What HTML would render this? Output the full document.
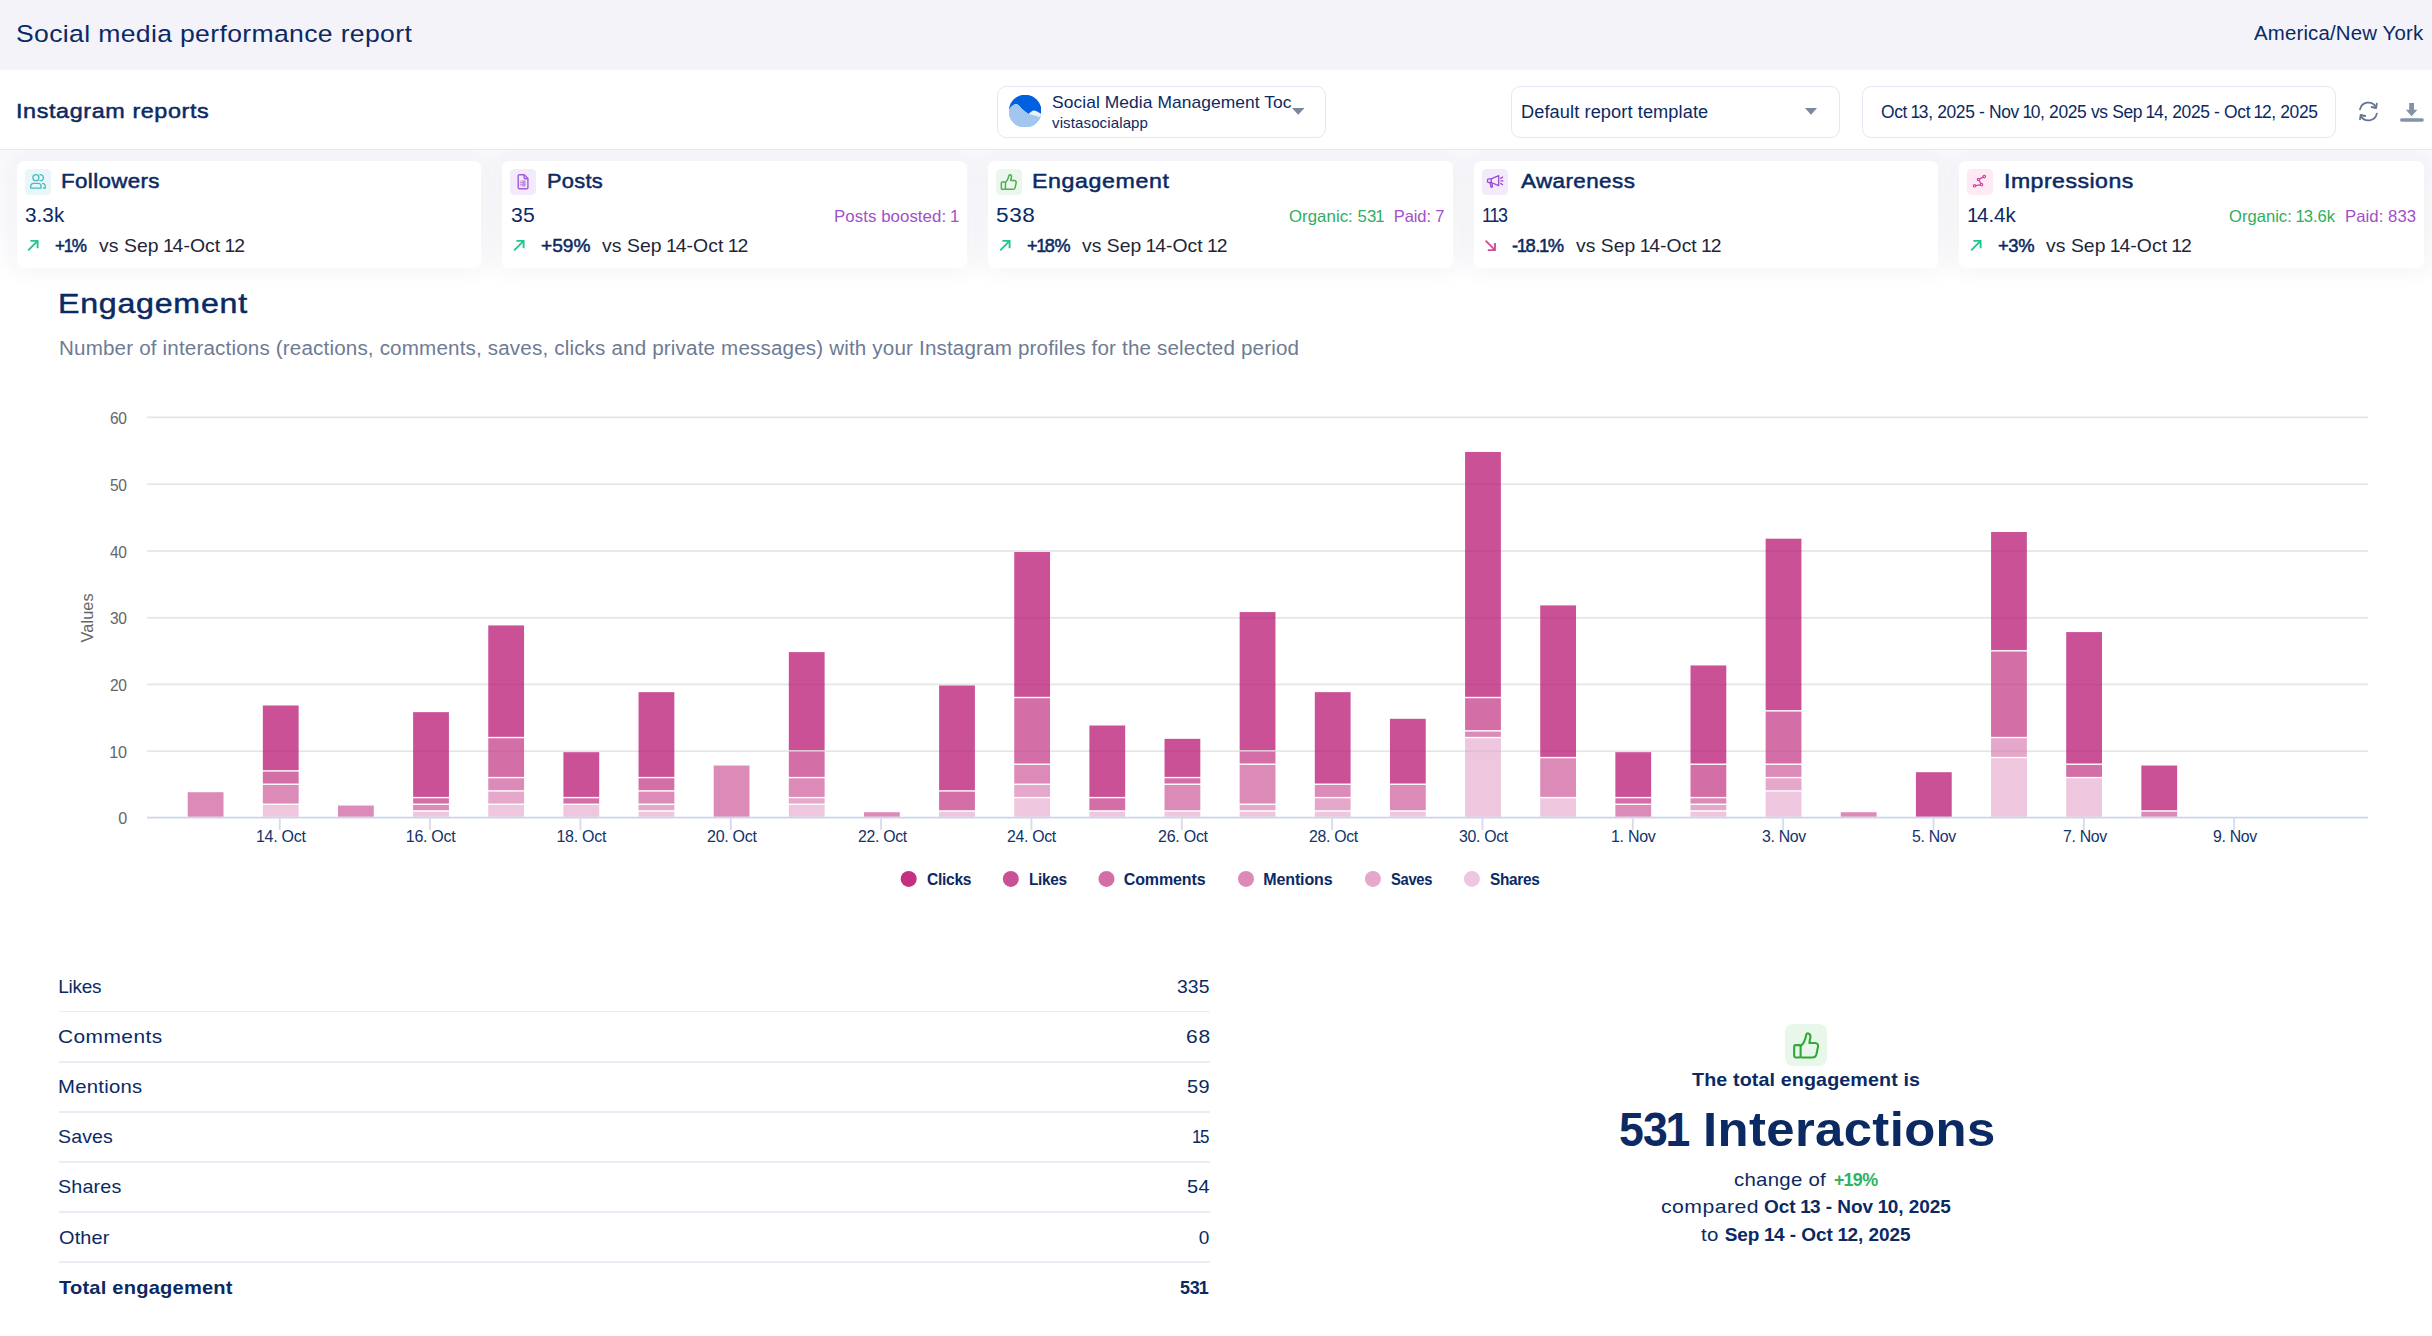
<!DOCTYPE html>
<html lang="en"><head><meta charset="utf-8"><title>Social media performance report</title>
<style>
html,body{margin:0;padding:0;background:#fff}
@media (max-width:1300px){html{zoom:.5}}
body{width:2432px;height:1336px;position:relative;overflow:hidden;font-family:"Liberation Sans",Arial,sans-serif}
.abs,.t,.box,.card,.ico,.ln{position:absolute}
.t{white-space:pre;line-height:1}
.n1{margin:0 -0.06em}
.n1b{margin:0 -0.03em}
.box{box-sizing:border-box;border:1.9px solid #e5e8f2;border-radius:9px;background:#fff}
.card{top:161px;height:106.5px;width:464.5px;background:#fff;border-radius:7px;box-shadow:0 0 22px 6px rgba(40,50,110,.04)}
.ico{width:26px;height:26px;border-radius:4.5px;top:169px}
.ln{left:58.5px;width:1151px;height:1.8px;background:#e9ecf4}
</style></head><body>
<div class="abs" style="left:0;top:0;width:2432px;height:69.5px;background:#f4f3f9"></div>
<div class="abs" style="left:0;top:150px;width:2432px;height:130px;background:linear-gradient(#f9f9fc,#fbfbfd 60%,#fff)"></div>
<div class="abs" style="left:0;top:148.6px;width:2432px;height:1.5px;background:#e7e8f0"></div>
<div class="box" style="left:997.2px;top:85.5px;width:329.3px;height:52.2px"></div>
<div class="box" style="left:1510.6px;top:85.5px;width:329.3px;height:52.2px"></div>
<div class="box" style="left:1861.8px;top:85.5px;width:474.4px;height:52.2px"></div>
<svg class="abs" style="left:1008.8px;top:95px" width="32.2" height="32" viewBox="0 0 32 32"><defs><clipPath id="av"><circle cx="16" cy="16.100" r="16.400"/></clipPath></defs><g clip-path="url(#av)"><rect width="32" height="32" fill="#0060e0"/><path d="M0 14.3C2.5 11.5 5 8.6 7.6 9.2c2.6.6 4.6 4.6 7.4 6.6 1.6 1.2 3 2.2 4.4 3.1 1.8-1.6 3.8-3.6 5.9-3.4 2.2.2 4.4 2 6.700 3.300V32H0z" fill="#e6effa"/><path d="M0 14.3C2.5 11.5 5 8.600 7.6 9.2c2.6.6 4.6 4.6 7.4 6.6 1.6 1.200 3 2.200 4.400 3.100 3.700 1 8.600 2.100 12.600 3.300V32H0z" fill="#a3c6ee"/></g></svg>
<svg class="abs" style="left:1291.8px;top:107.9px" width="12.4" height="7" viewBox="0 0 12.4 7"><path d="M0 0h12.4L6.2 6.8z" fill="#7c869d"/></svg>
<svg class="abs" style="left:1805.4px;top:108px" width="12" height="7" viewBox="0 0 12 7"><path d="M0 0h12L6 6.800z" fill="#7c869d"/></svg>
<svg class="abs" style="left:2356px;top:99px" width="25" height="25" viewBox="0 0 25 25"><g fill="none" stroke="#66758f" stroke-width="1.8" stroke-linecap="round" stroke-linejoin="round"><path d="M4 10.400A8.600 8.600 0 0 1 19.900 8"/><path d="M20.800 4.600l-.7 4.400-4.500-1"/><path d="M20.800 14.600A8.600 8.600 0 0 1 4.900 17"/><path d="M4 20.400l.7-4.400 4.500 1"/></g></svg>
<svg class="abs" style="left:2398px;top:100px" width="28" height="24" viewBox="0 0 28 24"><path d="M11.200 3h4.800v6.800h3.400L13.600 16.200 7.900 9.800h3.300z" fill="#8491ab"/><rect x="2" y="18.200" width="23.800" height="3.600" rx="1.800" fill="#8491ab"/></svg>
<div class="abs" style="left:0;top:150px;width:2432px;height:160px;overflow:hidden">
<div class="card" style="left:16.5px;top:11px"></div>
<div class="card" style="left:502.2px;top:11px"></div>
<div class="card" style="left:988px;top:11px"></div>
<div class="card" style="left:1473.75px;top:11px"></div>
<div class="card" style="left:1959.4px;top:11px"></div>
</div>
<div class="ico" style="left:24.50px;background:#eaf7f9"><svg width="26" height="26" viewBox="0 0 26 26" style="display:block"><g fill="none" stroke="#46bcc4" stroke-width="1.3"><circle cx="10.9" cy="8.7" r="3"/><path d="M5.7 19.2v-1.700a3.100 3.100 0 0 1 3.100-3.100h4.200a3.100 3.100 0 0 1 3.100 3.100v1.700z"/><path d="M14.4 5.900a3 3 0 1 1 0 5.600"/><path d="M17.100 14.400a3.200 3.200 0 0 1 3.200 3.200v1.600h-2.300"/></g></svg></div>
<svg class="abs" style="left:27.10px;top:239.4px" width="13" height="13" viewBox="0 0 13 13"><path d="M1.2 11.3 L10.6 1.9 M3.4 1.9 H10.6 V9.2" fill="none" stroke="#22c78a" stroke-width="1.9" stroke-linecap="butt" stroke-linejoin="miter"/></svg>
<div class="ico" style="left:510.20px;background:#f3ebfb"><svg width="26" height="26" viewBox="0 0 26 26" style="display:block"><g fill="none" stroke="#a35bd4" stroke-width="1.4" stroke-linejoin="round"><path d="M9.300 5.800h4.900l3.700 3.800v9.100a1.100 1.100 0 0 1-1.100 1.100H9.300a1.100 1.100 0 0 1-1.100-1.100V6.900a1.100 1.100 0 0 1 1.100-1.100z"/><path d="M14.100 6v2.700a1 1 0 0 0 1 1h2.700"/></g><g fill="#a35bd4"><rect x="9.700" y="11.300" width="5.800" height="6.300" fill-opacity=".28"/><rect x="12.300" y="11.300" width="3.200" height="6.300" fill-opacity=".4"/><rect x="9.700" y="13" width="5.800" height=".7" fill-opacity=".5"/><rect x="9.700" y="15" width="5.800" height=".7" fill-opacity=".5"/></g></svg></div>
<svg class="abs" style="left:512.80px;top:239.4px" width="13" height="13" viewBox="0 0 13 13"><path d="M1.2 11.3 L10.6 1.9 M3.4 1.9 H10.6 V9.2" fill="none" stroke="#22c78a" stroke-width="1.9" stroke-linecap="butt" stroke-linejoin="miter"/></svg>
<div class="ico" style="left:996.00px;background:#ebf7ec"><svg width="26" height="26" viewBox="0 0 26 26" style="display:block"><g transform="translate(12.800 13.100) scale(.93) translate(-13.300 -13)" fill="none" stroke="#4bb04f" stroke-width="1.600" stroke-linejoin="round"><rect x="5.300" y="12.800" width="4.400" height="8" rx="1"/><path d="M9.700 13.400c2-1.600 3.200-4.600 3.600-7.200.2-1 .9-1.300 1.500-1.200 1.200.3 1.500 1.700 1.300 2.900l-.7 3.400h3.900c1.300 0 2.200 1.100 1.900 2.400l-1.100 5.200c-.3 1.200-1.200 1.900-2.400 1.900H9.700"/></g></svg></div>
<svg class="abs" style="left:998.60px;top:239.4px" width="13" height="13" viewBox="0 0 13 13"><path d="M1.2 11.3 L10.6 1.9 M3.4 1.9 H10.6 V9.2" fill="none" stroke="#22c78a" stroke-width="1.9" stroke-linecap="butt" stroke-linejoin="miter"/></svg>
<div class="ico" style="left:1481.75px;background:#f3ebfb"><svg width="26" height="26" viewBox="0 0 26 26" style="display:block"><g fill="none" stroke="#9a4bcf" stroke-width="1.300" stroke-linejoin="round" stroke-linecap="round"><path d="M9.200 9.900l7.500-3.200v10l-7.500-3.200z"/><path d="M9.200 9.900H6.600a1.100 1.100 0 0 0-1.100 1.100v1.400a1.100 1.100 0 0 0 1.100 1.100h2.600"/><path d="M8.300 13.800l.5 3.800a.8.800 0 0 0 1.600 0l-.3-3.200"/><path d="M18.800 9.400l1.800-1.300M18.900 11.900h2M18.800 14.400l1.800 1.300"/></g></svg></div>
<svg class="abs" style="left:1484.15px;top:239.4px" width="13" height="13" viewBox="0 0 13 13"><path d="M1.6 1.7 L11 11.1 M3.8 11.1 H11 V3.9" fill="none" stroke="#d14d9c" stroke-width="1.9"/></svg>
<div class="ico" style="left:1967.40px;background:#fdeaf5"><svg width="26" height="26" viewBox="0 0 26 26" style="display:block"><g fill="none" stroke="#d0449a" stroke-width="1.200"><circle cx="7.600" cy="16.800" r="1.200"/><circle cx="14.500" cy="15.600" r="1.200"/><circle cx="11.500" cy="10.500" r="1.200"/><circle cx="17.300" cy="7.600" r="1.200"/><path d="M8.800 16.600l4.500-.8M13.900 14.500l-1.800-3M12.600 9.900l3.600-1.800"/></g></svg></div>
<svg class="abs" style="left:1970.00px;top:239.4px" width="13" height="13" viewBox="0 0 13 13"><path d="M1.2 11.3 L10.6 1.9 M3.4 1.9 H10.6 V9.2" fill="none" stroke="#22c78a" stroke-width="1.9" stroke-linecap="butt" stroke-linejoin="miter"/></svg>
<svg class="abs" style="left:0;top:380px" width="2432" height="540" viewBox="0 380 2432 540">
<rect x="147" y="416.40" width="2221" height="1.8" fill="#e6e6e6"/>
<rect x="147" y="483.30" width="2221" height="1.8" fill="#e6e6e6"/>
<rect x="147" y="550.10" width="2221" height="1.8" fill="#e6e6e6"/>
<rect x="147" y="616.90" width="2221" height="1.8" fill="#e6e6e6"/>
<rect x="147" y="683.50" width="2221" height="1.8" fill="#e6e6e6"/>
<rect x="147" y="750.30" width="2221" height="1.8" fill="#e6e6e6"/>
<rect x="187.70" y="792.21" width="35.8" height="24.59" fill="#dc8ab8"/>
<rect x="262.84" y="804.96" width="35.8" height="11.84" fill="#eec6de"/>
<rect x="262.84" y="784.94" width="35.8" height="18.61" fill="#dc8ab8"/>
<rect x="262.84" y="771.60" width="35.8" height="11.94" fill="#d36fa6"/>
<rect x="262.84" y="705.48" width="35.8" height="64.72" fill="#cb5197"/>
<rect x="337.98" y="805.56" width="35.8" height="11.24" fill="#dc8ab8"/>
<rect x="413.12" y="811.63" width="35.8" height="5.17" fill="#eec6de"/>
<rect x="413.12" y="804.96" width="35.8" height="5.27" fill="#dc8ab8"/>
<rect x="413.12" y="798.29" width="35.8" height="5.27" fill="#d36fa6"/>
<rect x="413.12" y="712.15" width="35.8" height="84.73" fill="#cb5197"/>
<rect x="488.26" y="804.96" width="35.8" height="11.84" fill="#eec6de"/>
<rect x="488.26" y="791.61" width="35.8" height="11.94" fill="#e5a7ca"/>
<rect x="488.26" y="778.27" width="35.8" height="11.94" fill="#dc8ab8"/>
<rect x="488.26" y="738.24" width="35.8" height="38.63" fill="#d36fa6"/>
<rect x="488.26" y="625.42" width="35.8" height="111.42" fill="#cb5197"/>
<rect x="563.40" y="804.96" width="35.8" height="11.84" fill="#eec6de"/>
<rect x="563.40" y="798.29" width="35.8" height="5.27" fill="#d36fa6"/>
<rect x="563.40" y="752.18" width="35.8" height="44.70" fill="#cb5197"/>
<rect x="638.54" y="811.63" width="35.8" height="5.17" fill="#eec6de"/>
<rect x="638.54" y="804.96" width="35.8" height="5.27" fill="#e5a7ca"/>
<rect x="638.54" y="791.61" width="35.8" height="11.94" fill="#dc8ab8"/>
<rect x="638.54" y="778.27" width="35.8" height="11.94" fill="#d36fa6"/>
<rect x="638.54" y="692.14" width="35.8" height="84.73" fill="#cb5197"/>
<rect x="713.68" y="765.53" width="35.8" height="51.27" fill="#dc8ab8"/>
<rect x="788.82" y="804.96" width="35.8" height="11.84" fill="#eec6de"/>
<rect x="788.82" y="798.29" width="35.8" height="5.27" fill="#e5a7ca"/>
<rect x="788.82" y="778.27" width="35.8" height="18.61" fill="#dc8ab8"/>
<rect x="788.82" y="751.58" width="35.8" height="25.29" fill="#d36fa6"/>
<rect x="788.82" y="652.11" width="35.8" height="98.07" fill="#cb5197"/>
<rect x="863.96" y="812.23" width="35.8" height="4.57" fill="#dc8ab8"/>
<rect x="939.10" y="811.63" width="35.8" height="5.17" fill="#eec6de"/>
<rect x="939.10" y="791.61" width="35.8" height="18.61" fill="#d36fa6"/>
<rect x="939.10" y="685.47" width="35.8" height="104.75" fill="#cb5197"/>
<rect x="1014.24" y="798.29" width="35.8" height="18.51" fill="#eec6de"/>
<rect x="1014.24" y="784.94" width="35.8" height="11.94" fill="#e5a7ca"/>
<rect x="1014.24" y="764.93" width="35.8" height="18.61" fill="#dc8ab8"/>
<rect x="1014.24" y="698.21" width="35.8" height="65.32" fill="#d36fa6"/>
<rect x="1014.24" y="552.03" width="35.8" height="144.78" fill="#cb5197"/>
<rect x="1089.38" y="811.63" width="35.8" height="5.17" fill="#eec6de"/>
<rect x="1089.38" y="798.29" width="35.8" height="11.94" fill="#d36fa6"/>
<rect x="1089.38" y="725.50" width="35.8" height="71.39" fill="#cb5197"/>
<rect x="1164.52" y="811.63" width="35.8" height="5.17" fill="#eec6de"/>
<rect x="1164.52" y="784.94" width="35.8" height="25.29" fill="#dc8ab8"/>
<rect x="1164.52" y="778.27" width="35.8" height="5.27" fill="#d36fa6"/>
<rect x="1164.52" y="738.84" width="35.8" height="38.03" fill="#cb5197"/>
<rect x="1239.66" y="811.63" width="35.8" height="5.17" fill="#eec6de"/>
<rect x="1239.66" y="804.96" width="35.8" height="5.27" fill="#e5a7ca"/>
<rect x="1239.66" y="764.93" width="35.8" height="38.63" fill="#dc8ab8"/>
<rect x="1239.66" y="751.58" width="35.8" height="11.94" fill="#d36fa6"/>
<rect x="1239.66" y="612.08" width="35.8" height="138.10" fill="#cb5197"/>
<rect x="1314.80" y="811.63" width="35.8" height="5.17" fill="#eec6de"/>
<rect x="1314.80" y="798.29" width="35.8" height="11.94" fill="#e5a7ca"/>
<rect x="1314.80" y="784.94" width="35.8" height="11.94" fill="#dc8ab8"/>
<rect x="1314.80" y="692.14" width="35.8" height="91.40" fill="#cb5197"/>
<rect x="1389.94" y="811.63" width="35.8" height="5.17" fill="#eec6de"/>
<rect x="1389.94" y="784.94" width="35.8" height="25.29" fill="#dc8ab8"/>
<rect x="1389.94" y="718.82" width="35.8" height="64.72" fill="#cb5197"/>
<rect x="1465.08" y="738.24" width="35.8" height="78.56" fill="#eec6de"/>
<rect x="1465.08" y="731.57" width="35.8" height="5.27" fill="#dc8ab8"/>
<rect x="1465.08" y="698.21" width="35.8" height="31.96" fill="#d36fa6"/>
<rect x="1465.08" y="451.96" width="35.8" height="244.85" fill="#cb5197"/>
<rect x="1540.22" y="798.29" width="35.8" height="18.51" fill="#eec6de"/>
<rect x="1540.22" y="758.26" width="35.8" height="38.63" fill="#dc8ab8"/>
<rect x="1540.22" y="605.41" width="35.8" height="151.45" fill="#cb5197"/>
<rect x="1615.36" y="804.96" width="35.8" height="11.84" fill="#dc8ab8"/>
<rect x="1615.36" y="798.29" width="35.8" height="5.27" fill="#d36fa6"/>
<rect x="1615.36" y="752.18" width="35.8" height="44.70" fill="#cb5197"/>
<rect x="1690.50" y="811.63" width="35.8" height="5.17" fill="#eec6de"/>
<rect x="1690.50" y="804.96" width="35.8" height="5.27" fill="#e5a7ca"/>
<rect x="1690.50" y="798.29" width="35.8" height="5.27" fill="#dc8ab8"/>
<rect x="1690.50" y="764.93" width="35.8" height="31.96" fill="#d36fa6"/>
<rect x="1690.50" y="665.45" width="35.8" height="98.08" fill="#cb5197"/>
<rect x="1765.64" y="791.61" width="35.8" height="25.19" fill="#eec6de"/>
<rect x="1765.64" y="778.27" width="35.8" height="11.94" fill="#e5a7ca"/>
<rect x="1765.64" y="764.93" width="35.8" height="11.94" fill="#dc8ab8"/>
<rect x="1765.64" y="711.55" width="35.8" height="51.97" fill="#d36fa6"/>
<rect x="1765.64" y="538.69" width="35.8" height="171.46" fill="#cb5197"/>
<rect x="1840.78" y="812.23" width="35.8" height="4.57" fill="#dc8ab8"/>
<rect x="1915.92" y="772.20" width="35.8" height="44.60" fill="#cb5197"/>
<rect x="1991.06" y="758.26" width="35.8" height="58.54" fill="#eec6de"/>
<rect x="1991.06" y="738.24" width="35.8" height="18.62" fill="#e5a7ca"/>
<rect x="1991.06" y="651.51" width="35.8" height="85.33" fill="#d36fa6"/>
<rect x="1991.06" y="532.02" width="35.8" height="118.09" fill="#cb5197"/>
<rect x="2066.20" y="778.27" width="35.8" height="38.53" fill="#eec6de"/>
<rect x="2066.20" y="764.93" width="35.8" height="11.94" fill="#d36fa6"/>
<rect x="2066.20" y="632.09" width="35.8" height="131.43" fill="#cb5197"/>
<rect x="2141.34" y="811.63" width="35.8" height="5.17" fill="#dc8ab8"/>
<rect x="2141.34" y="765.53" width="35.8" height="44.70" fill="#cb5197"/>
<rect x="262.84" y="750.30" width="35.8" height="1.8" fill="#400020" fill-opacity="0.05"/>
<rect x="413.12" y="750.30" width="35.8" height="1.8" fill="#400020" fill-opacity="0.05"/>
<rect x="488.26" y="683.50" width="35.8" height="1.8" fill="#400020" fill-opacity="0.05"/>
<rect x="488.26" y="750.30" width="35.8" height="1.8" fill="#400020" fill-opacity="0.05"/>
<rect x="638.54" y="750.30" width="35.8" height="1.8" fill="#400020" fill-opacity="0.05"/>
<rect x="788.82" y="683.50" width="35.8" height="1.8" fill="#400020" fill-opacity="0.05"/>
<rect x="788.82" y="750.30" width="35.8" height="1.8" fill="#400020" fill-opacity="0.05"/>
<rect x="939.10" y="750.30" width="35.8" height="1.8" fill="#400020" fill-opacity="0.05"/>
<rect x="1014.24" y="616.90" width="35.8" height="1.8" fill="#400020" fill-opacity="0.05"/>
<rect x="1014.24" y="683.50" width="35.8" height="1.8" fill="#400020" fill-opacity="0.05"/>
<rect x="1014.24" y="750.30" width="35.8" height="1.8" fill="#400020" fill-opacity="0.05"/>
<rect x="1089.38" y="750.30" width="35.8" height="1.8" fill="#400020" fill-opacity="0.05"/>
<rect x="1164.52" y="750.30" width="35.8" height="1.8" fill="#400020" fill-opacity="0.05"/>
<rect x="1239.66" y="616.90" width="35.8" height="1.8" fill="#400020" fill-opacity="0.05"/>
<rect x="1239.66" y="683.50" width="35.8" height="1.8" fill="#400020" fill-opacity="0.05"/>
<rect x="1239.66" y="750.30" width="35.8" height="1.8" fill="#400020" fill-opacity="0.05"/>
<rect x="1314.80" y="750.30" width="35.8" height="1.8" fill="#400020" fill-opacity="0.05"/>
<rect x="1389.94" y="750.30" width="35.8" height="1.8" fill="#400020" fill-opacity="0.05"/>
<rect x="1465.08" y="483.30" width="35.8" height="1.8" fill="#400020" fill-opacity="0.05"/>
<rect x="1465.08" y="550.10" width="35.8" height="1.8" fill="#400020" fill-opacity="0.05"/>
<rect x="1465.08" y="616.90" width="35.8" height="1.8" fill="#400020" fill-opacity="0.05"/>
<rect x="1465.08" y="683.50" width="35.8" height="1.8" fill="#400020" fill-opacity="0.05"/>
<rect x="1465.08" y="750.30" width="35.8" height="1.8" fill="#400020" fill-opacity="0.05"/>
<rect x="1540.22" y="616.90" width="35.8" height="1.8" fill="#400020" fill-opacity="0.05"/>
<rect x="1540.22" y="683.50" width="35.8" height="1.8" fill="#400020" fill-opacity="0.05"/>
<rect x="1540.22" y="750.30" width="35.8" height="1.8" fill="#400020" fill-opacity="0.05"/>
<rect x="1690.50" y="683.50" width="35.8" height="1.8" fill="#400020" fill-opacity="0.05"/>
<rect x="1690.50" y="750.30" width="35.8" height="1.8" fill="#400020" fill-opacity="0.05"/>
<rect x="1765.64" y="550.10" width="35.8" height="1.8" fill="#400020" fill-opacity="0.05"/>
<rect x="1765.64" y="616.90" width="35.8" height="1.8" fill="#400020" fill-opacity="0.05"/>
<rect x="1765.64" y="683.50" width="35.8" height="1.8" fill="#400020" fill-opacity="0.05"/>
<rect x="1765.64" y="750.30" width="35.8" height="1.8" fill="#400020" fill-opacity="0.05"/>
<rect x="1991.06" y="550.10" width="35.8" height="1.8" fill="#400020" fill-opacity="0.05"/>
<rect x="1991.06" y="616.90" width="35.8" height="1.8" fill="#400020" fill-opacity="0.05"/>
<rect x="1991.06" y="683.50" width="35.8" height="1.8" fill="#400020" fill-opacity="0.05"/>
<rect x="1991.06" y="750.30" width="35.8" height="1.8" fill="#400020" fill-opacity="0.05"/>
<rect x="2066.20" y="683.50" width="35.8" height="1.8" fill="#400020" fill-opacity="0.05"/>
<rect x="2066.20" y="750.30" width="35.8" height="1.8" fill="#400020" fill-opacity="0.05"/>
<rect x="147" y="816.70" width="2221" height="1.8" fill="#ccd6eb"/>
<rect x="278.80" y="817.60" width="1.9" height="12.3" fill="#d6dcee"/>
<rect x="429.14" y="817.60" width="1.9" height="12.3" fill="#d6dcee"/>
<rect x="579.48" y="817.60" width="1.9" height="12.3" fill="#d6dcee"/>
<rect x="729.82" y="817.60" width="1.9" height="12.3" fill="#d6dcee"/>
<rect x="880.16" y="817.60" width="1.9" height="12.3" fill="#d6dcee"/>
<rect x="1030.50" y="817.60" width="1.9" height="12.3" fill="#d6dcee"/>
<rect x="1180.84" y="817.60" width="1.9" height="12.3" fill="#d6dcee"/>
<rect x="1331.18" y="817.60" width="1.9" height="12.3" fill="#d6dcee"/>
<rect x="1481.52" y="817.60" width="1.9" height="12.3" fill="#d6dcee"/>
<rect x="1631.86" y="817.60" width="1.9" height="12.3" fill="#d6dcee"/>
<rect x="1782.20" y="817.60" width="1.9" height="12.3" fill="#d6dcee"/>
<rect x="1932.54" y="817.60" width="1.9" height="12.3" fill="#d6dcee"/>
<rect x="2082.88" y="817.60" width="1.9" height="12.3" fill="#d6dcee"/>
<rect x="2233.22" y="817.60" width="1.9" height="12.3" fill="#d6dcee"/>
<circle cx="908.7" cy="878.9" r="8" fill="#c4307f"/>
<circle cx="1010.8" cy="878.9" r="8" fill="#cb5197"/>
<circle cx="1106.5" cy="878.9" r="8" fill="#d36fa6"/>
<circle cx="1246.0" cy="878.9" r="8" fill="#dc8ab8"/>
<circle cx="1372.9" cy="878.9" r="8" fill="#e5a7ca"/>
<circle cx="1471.9" cy="878.9" r="8" fill="#eec6de"/>
<text transform="translate(93.2 617.9) rotate(-90)" text-anchor="middle" textLength="49" lengthAdjust="spacing" font-family='"Liberation Sans", Arial, sans-serif' font-size="16.3" fill="#666666">Values</text>
</svg>
<div class="ln" style="top:1010.60px"></div>
<div class="ln" style="top:1060.77px"></div>
<div class="ln" style="top:1110.94px"></div>
<div class="ln" style="top:1161.11px"></div>
<div class="ln" style="top:1211.28px"></div>
<div class="ln" style="top:1261.45px"></div>
<div class="abs" style="left:1785px;top:1024.3px;width:41.8px;height:42px;border-radius:8px;background:#e9f7ea"><svg width="41.8" height="42" viewBox="0 0 42 42" style="display:block"><g transform="translate(21 21.8) scale(.95) translate(-21.400 -21)" fill="none" stroke="#2fa836" stroke-width="2.2" stroke-linejoin="round"><rect x="9" y="20.300" width="6.800" height="13" rx="1.500"/><path d="M15.800 21.400c3.200-2.600 5.200-7.400 5.800-11.600.3-1.600 1.400-2.100 2.400-1.900 1.900.5 2.400 2.700 2.100 4.700l-1.100 5.400h6.200c2.100 0 3.500 1.800 3 3.900l-1.700 8.300c-.5 1.900-1.900 3.100-3.900 3.100H15.800"/></g></svg></div>
<header>
<span class="t" style="font:400 24.5px/1 'Liberation Sans',Arial,sans-serif;color:#0b2a63;left:16.36px;top:21.90px;letter-spacing:0.310px;transform:scaleX(1.0852);transform-origin:0 0;">Social media performance report</span>
<span class="t" style="font:400 19.5px/1 'Liberation Sans',Arial,sans-serif;color:#0b2a63;left:2253.66px;top:23.60px;letter-spacing:0.157px;transform:scaleX(1.0463);transform-origin:0 0;">America/New York</span>
</header>
<nav aria-label="Report controls">
<span class="t" style="font:400 20.5px/1 'Liberation Sans',Arial,sans-serif;color:#0b2a63;-webkit-text-stroke:0.5px #0b2a63;left:16.40px;top:101.40px;letter-spacing:0.525px;transform:scaleX(1.1400);transform-origin:0 0;">Instagram reports</span>
<span class="t" style="font:400 17px/1 'Liberation Sans',Arial,sans-serif;color:#0b2a63;left:1051.66px;top:93.50px;letter-spacing:0.069px;transform:scaleX(1.0237);transform-origin:0 0;">Social Media Management Toc</span>
<span class="t" style="font:400 14.5px/1 'Liberation Sans',Arial,sans-serif;color:#0b2a63;left:1051.66px;top:116.20px;letter-spacing:0.091px;transform:scaleX(1.0405);transform-origin:0 0;">vistasocialapp</span>
<span class="t" style="font:400 17.5px/1 'Liberation Sans',Arial,sans-serif;color:#0b2a63;left:1521.44px;top:103.50px;letter-spacing:0.100px;transform:scaleX(1.0386);transform-origin:0 0;">Default report template</span>
<span class="t" style="font:400 18px/1 'Liberation Sans',Arial,sans-serif;color:#0b2a63;left:1880.66px;top:102.50px;letter-spacing:-0.360px;transform:scaleX(0.9684);transform-origin:0 0;">Oct <span class="n1">1</span>3, 2025 - Nov <span class="n1">1</span>0, 2025 vs Sep <span class="n1">1</span>4, 2025 - Oct <span class="n1">1</span>2, 2025</span>
</nav>
<section aria-label="Key metrics">
<span class="t" style="font:400 20.5px/1 'Liberation Sans',Arial,sans-serif;color:#0b2a63;-webkit-text-stroke:0.5px #0b2a63;left:61.11px;top:171.20px;letter-spacing:0.310px;transform:scaleX(1.0926);transform-origin:0 0;">Followers</span>
<span class="t" style="font:400 20.5px/1 'Liberation Sans',Arial,sans-serif;color:#0b2a63;left:25.16px;top:205.40px;letter-spacing:0.041px;transform:scaleX(1.0097);transform-origin:0 0;">3.3k</span>
<span class="t" style="font:400 19px/1 'Liberation Sans',Arial,sans-serif;color:#0b2a63;-webkit-text-stroke:0.5px #0b2a63;left:55.16px;top:235.60px;letter-spacing:-0.380px;transform:scaleX(0.9004);transform-origin:0 0;">+<span class="n1">1</span>%</span>
<span class="t" style="font:400 19px/1 'Liberation Sans',Arial,sans-serif;color:#1e2538;left:98.91px;top:235.60px;letter-spacing:0.061px;transform:scaleX(1.0195);transform-origin:0 0;">vs Sep <span class="n1">1</span>4-Oct <span class="n1">1</span>2</span>
<span class="t" style="font:400 20.5px/1 'Liberation Sans',Arial,sans-serif;color:#0b2a63;-webkit-text-stroke:0.5px #0b2a63;left:547.32px;top:171.20px;letter-spacing:0.265px;transform:scaleX(1.0661);transform-origin:0 0;">Posts</span>
<span class="t" style="font:400 20.5px/1 'Liberation Sans',Arial,sans-serif;color:#0b2a63;left:510.91px;top:205.40px;letter-spacing:0.237px;transform:scaleX(1.0321);transform-origin:0 0;">35</span>
<span class="t" style="font:400 19px/1 'Liberation Sans',Arial,sans-serif;color:#0b2a63;-webkit-text-stroke:0.5px #0b2a63;left:541.04px;top:235.60px;letter-spacing:0.034px;transform:scaleX(1.0063);transform-origin:0 0;">+59%</span>
<span class="t" style="font:400 19px/1 'Liberation Sans',Arial,sans-serif;color:#1e2538;left:602.04px;top:235.60px;letter-spacing:0.065px;transform:scaleX(1.0208);transform-origin:0 0;">vs Sep <span class="n1">1</span>4-Oct <span class="n1">1</span>2</span>
<span class="t" style="font:400 16.5px/1 'Liberation Sans',Arial,sans-serif;color:#a24fc9;left:834.36px;top:208.00px;letter-spacing:0.054px;transform:scaleX(1.0207);transform-origin:0 0;">Posts boosted: <span class="n1">1</span></span>
<span class="t" style="font:400 20.5px/1 'Liberation Sans',Arial,sans-serif;color:#0b2a63;-webkit-text-stroke:0.5px #0b2a63;left:1032.44px;top:171.20px;letter-spacing:0.505px;transform:scaleX(1.1330);transform-origin:0 0;">Engagement</span>
<span class="t" style="font:400 20.5px/1 'Liberation Sans',Arial,sans-serif;color:#0b2a63;left:996.11px;top:205.40px;letter-spacing:0.526px;transform:scaleX(1.1015);transform-origin:0 0;">538</span>
<span class="t" style="font:400 19px/1 'Liberation Sans',Arial,sans-serif;color:#0b2a63;-webkit-text-stroke:0.5px #0b2a63;left:1027.04px;top:235.60px;letter-spacing:-0.380px;transform:scaleX(0.9522);transform-origin:0 0;">+<span class="n1">1</span>8%</span>
<span class="t" style="font:400 19px/1 'Liberation Sans',Arial,sans-serif;color:#1e2538;left:1082.20px;top:235.60px;letter-spacing:0.050px;transform:scaleX(1.0162);transform-origin:0 0;">vs Sep <span class="n1">1</span>4-Oct <span class="n1">1</span>2</span>
<span class="t" style="font:400 16.5px/1 'Liberation Sans',Arial,sans-serif;color:#2fae5e;left:1288.54px;top:208.00px;letter-spacing:0.047px;transform:scaleX(1.0171);transform-origin:0 0;">Organic: 53<span class="n1">1</span></span>
<span class="t" style="font:400 16.5px/1 'Liberation Sans',Arial,sans-serif;color:#a24fc9;left:1393.78px;top:208.00px;letter-spacing:-0.102px;">Paid: 7</span>
<span class="t" style="font:400 20.5px/1 'Liberation Sans',Arial,sans-serif;color:#0b2a63;-webkit-text-stroke:0.5px #0b2a63;left:1520.84px;top:171.20px;letter-spacing:0.366px;transform:scaleX(1.0951);transform-origin:0 0;">Awareness</span>
<span class="t" style="font:400 20.5px/1 'Liberation Sans',Arial,sans-serif;color:#0b2a63;left:1482.58px;top:205.40px;letter-spacing:-0.410px;transform:scaleX(0.8709);transform-origin:0 0;"><span class="n1">1</span><span class="n1">1</span>3</span>
<span class="t" style="font:400 19px/1 'Liberation Sans',Arial,sans-serif;color:#0b2a63;-webkit-text-stroke:0.5px #0b2a63;left:1512.16px;top:235.60px;letter-spacing:-0.380px;transform:scaleX(0.9671);transform-origin:0 0;">-<span class="n1">1</span>8.<span class="n1">1</span>%</span>
<span class="t" style="font:400 19px/1 'Liberation Sans',Arial,sans-serif;color:#1e2538;left:1576.20px;top:235.60px;letter-spacing:0.051px;transform:scaleX(1.0164);transform-origin:0 0;">vs Sep <span class="n1">1</span>4-Oct <span class="n1">1</span>2</span>
<span class="t" style="font:400 20.5px/1 'Liberation Sans',Arial,sans-serif;color:#0b2a63;-webkit-text-stroke:0.5px #0b2a63;left:2003.90px;top:171.20px;letter-spacing:0.416px;transform:scaleX(1.1272);transform-origin:0 0;">Impressions</span>
<span class="t" style="font:400 20.5px/1 'Liberation Sans',Arial,sans-serif;color:#0b2a63;left:1968.12px;top:205.40px;letter-spacing:-0.045px;"><span class="n1">1</span>4.4k</span>
<span class="t" style="font:400 19px/1 'Liberation Sans',Arial,sans-serif;color:#0b2a63;-webkit-text-stroke:0.5px #0b2a63;left:1998.12px;top:235.60px;letter-spacing:-0.380px;transform:scaleX(0.9677);transform-origin:0 0;">+3%</span>
<span class="t" style="font:400 19px/1 'Liberation Sans',Arial,sans-serif;color:#1e2538;left:2046.20px;top:235.60px;letter-spacing:0.057px;transform:scaleX(1.0184);transform-origin:0 0;">vs Sep <span class="n1">1</span>4-Oct <span class="n1">1</span>2</span>
<span class="t" style="font:400 16.5px/1 'Liberation Sans',Arial,sans-serif;color:#2fae5e;left:2228.58px;top:208.00px;letter-spacing:0.014px;transform:scaleX(1.0051);transform-origin:0 0;">Organic: <span class="n1">1</span>3.6k</span>
<span class="t" style="font:400 16.5px/1 'Liberation Sans',Arial,sans-serif;color:#a24fc9;left:2345.28px;top:208.00px;letter-spacing:0.042px;transform:scaleX(1.0147);transform-origin:0 0;">Paid: 833</span>
</section>
<section aria-label="Engagement chart">
<span class="t" style="font:400 28.5px/1 'Liberation Sans',Arial,sans-serif;color:#0b2a63;-webkit-text-stroke:0.5px #0b2a63;left:58.06px;top:288.50px;letter-spacing:0.677px;transform:scaleX(1.1275);transform-origin:0 0;">Engagement</span>
<span class="t" style="font:400 19.5px/1 'Liberation Sans',Arial,sans-serif;color:#6e7b94;left:58.86px;top:339.20px;letter-spacing:0.156px;transform:scaleX(1.0565);transform-origin:0 0;">Number of interactions (reactions, comments, saves, clicks and private messages) with your Instagram profiles for the selected period</span>
<span class="t" style="font:700 16px/1 'Liberation Sans',Helvetica,Arial,sans-serif;color:#0b2a63;left:926.58px;top:872.30px;letter-spacing:-0.320px;transform:scaleX(0.9763);transform-origin:0 0;">Clicks</span>
<span class="t" style="font:700 16px/1 'Liberation Sans',Helvetica,Arial,sans-serif;color:#0b2a63;left:1029.04px;top:872.30px;letter-spacing:-0.320px;transform:scaleX(0.9586);transform-origin:0 0;">Likes</span>
<span class="t" style="font:700 16px/1 'Liberation Sans',Helvetica,Arial,sans-serif;color:#0b2a63;left:1123.70px;top:872.30px;letter-spacing:-0.104px;">Comments</span>
<span class="t" style="font:700 16px/1 'Liberation Sans',Helvetica,Arial,sans-serif;color:#0b2a63;left:1263.28px;top:872.30px;letter-spacing:-0.120px;">Mentions</span>
<span class="t" style="font:700 16px/1 'Liberation Sans',Helvetica,Arial,sans-serif;color:#0b2a63;left:1390.58px;top:872.30px;letter-spacing:-0.320px;transform:scaleX(0.9216);transform-origin:0 0;">Saves</span>
<span class="t" style="font:700 16px/1 'Liberation Sans',Helvetica,Arial,sans-serif;color:#0b2a63;left:1489.58px;top:872.30px;letter-spacing:-0.320px;transform:scaleX(0.9642);transform-origin:0 0;">Shares</span>
<span class="t" style="font:400 16.2px/1 'Liberation Sans',Helvetica,Arial,sans-serif;color:#666666;left:110.04px;top:409.80px;letter-spacing:-0.324px;transform:scaleX(0.9609);transform-origin:0 0;">60</span>
<span class="t" style="font:400 16.2px/1 'Liberation Sans',Helvetica,Arial,sans-serif;color:#666666;left:110.04px;top:476.70px;letter-spacing:-0.324px;transform:scaleX(0.9609);transform-origin:0 0;">50</span>
<span class="t" style="font:400 16.2px/1 'Liberation Sans',Helvetica,Arial,sans-serif;color:#666666;left:110.04px;top:543.50px;letter-spacing:-0.324px;transform:scaleX(0.9609);transform-origin:0 0;">40</span>
<span class="t" style="font:400 16.2px/1 'Liberation Sans',Helvetica,Arial,sans-serif;color:#666666;left:110.04px;top:610.30px;letter-spacing:-0.324px;transform:scaleX(0.9609);transform-origin:0 0;">30</span>
<span class="t" style="font:400 16.2px/1 'Liberation Sans',Helvetica,Arial,sans-serif;color:#666666;left:110.04px;top:676.90px;letter-spacing:-0.324px;transform:scaleX(0.9609);transform-origin:0 0;">20</span>
<span class="t" style="font:400 16.2px/1 'Liberation Sans',Helvetica,Arial,sans-serif;color:#666666;left:109.24px;top:743.70px;letter-spacing:-0.216px;">10</span>
<span class="t" style="font:400 16.2px/1 'Liberation Sans',Helvetica,Arial,sans-serif;color:#666666;left:118.16px;top:810.10px;letter-spacing:0.000px;">0</span>
<span class="t" style="font:400 16px/1 'Liberation Sans',Helvetica,Arial,sans-serif;color:#12336b;left:255.95px;top:829.40px;letter-spacing:-0.270px;">14. Oct</span>
<span class="t" style="font:400 16px/1 'Liberation Sans',Helvetica,Arial,sans-serif;color:#12336b;left:405.78px;top:829.40px;letter-spacing:-0.270px;">16. Oct</span>
<span class="t" style="font:400 16px/1 'Liberation Sans',Helvetica,Arial,sans-serif;color:#12336b;left:556.41px;top:829.40px;letter-spacing:-0.270px;">18. Oct</span>
<span class="t" style="font:400 16px/1 'Liberation Sans',Helvetica,Arial,sans-serif;color:#12336b;left:707.03px;top:829.40px;letter-spacing:-0.270px;">20. Oct</span>
<span class="t" style="font:400 16px/1 'Liberation Sans',Helvetica,Arial,sans-serif;color:#12336b;left:857.66px;top:829.40px;letter-spacing:-0.320px;transform:scaleX(0.9900);transform-origin:0 0;">22. Oct</span>
<span class="t" style="font:400 16px/1 'Liberation Sans',Helvetica,Arial,sans-serif;color:#12336b;left:1007.49px;top:829.40px;letter-spacing:-0.320px;transform:scaleX(0.9900);transform-origin:0 0;">24. Oct</span>
<span class="t" style="font:400 16px/1 'Liberation Sans',Helvetica,Arial,sans-serif;color:#12336b;left:1158.12px;top:829.40px;letter-spacing:-0.270px;">26. Oct</span>
<span class="t" style="font:400 16px/1 'Liberation Sans',Helvetica,Arial,sans-serif;color:#12336b;left:1308.75px;top:829.40px;letter-spacing:-0.320px;transform:scaleX(0.9900);transform-origin:0 0;">28. Oct</span>
<span class="t" style="font:400 16px/1 'Liberation Sans',Helvetica,Arial,sans-serif;color:#12336b;left:1458.57px;top:829.40px;letter-spacing:-0.320px;transform:scaleX(0.9900);transform-origin:0 0;">30. Oct</span>
<span class="t" style="font:400 16px/1 'Liberation Sans',Helvetica,Arial,sans-serif;color:#12336b;left:1610.90px;top:829.40px;letter-spacing:-0.258px;">1. Nov</span>
<span class="t" style="font:400 16px/1 'Liberation Sans',Helvetica,Arial,sans-serif;color:#12336b;left:1762.33px;top:829.40px;letter-spacing:-0.320px;transform:scaleX(0.9890);transform-origin:0 0;">3. Nov</span>
<span class="t" style="font:400 16px/1 'Liberation Sans',Helvetica,Arial,sans-serif;color:#12336b;left:1912.16px;top:829.40px;letter-spacing:-0.320px;transform:scaleX(0.9890);transform-origin:0 0;">5. Nov</span>
<span class="t" style="font:400 16px/1 'Liberation Sans',Helvetica,Arial,sans-serif;color:#12336b;left:2062.79px;top:829.40px;letter-spacing:-0.320px;transform:scaleX(0.9890);transform-origin:0 0;">7. Nov</span>
<span class="t" style="font:400 16px/1 'Liberation Sans',Helvetica,Arial,sans-serif;color:#12336b;left:2213.41px;top:829.40px;letter-spacing:-0.320px;transform:scaleX(0.9890);transform-origin:0 0;">9. Nov</span>
</section>
<section aria-label="Engagement totals">
<span class="t" style="font:400 19px/1 'Liberation Sans',Arial,sans-serif;color:#0b2a63;left:58.36px;top:976.75px;letter-spacing:-0.327px;">Likes</span>
<span class="t" style="font:400 19px/1 'Liberation Sans',Arial,sans-serif;color:#0b2a63;left:1176.66px;top:976.75px;letter-spacing:0.098px;transform:scaleX(1.0189);transform-origin:0 0;">335</span>
<span class="t" style="font:400 19px/1 'Liberation Sans',Arial,sans-serif;color:#0b2a63;left:58.36px;top:1026.92px;letter-spacing:0.400px;transform:scaleX(1.1006);transform-origin:0 0;">Comments</span>
<span class="t" style="font:400 19px/1 'Liberation Sans',Arial,sans-serif;color:#0b2a63;left:1185.86px;top:1026.92px;letter-spacing:0.670px;transform:scaleX(1.1050);transform-origin:0 0;">68</span>
<span class="t" style="font:400 19px/1 'Liberation Sans',Arial,sans-serif;color:#0b2a63;left:58.36px;top:1077.09px;letter-spacing:0.236px;transform:scaleX(1.0688);transform-origin:0 0;">Mentions</span>
<span class="t" style="font:400 19px/1 'Liberation Sans',Arial,sans-serif;color:#0b2a63;left:1186.66px;top:1077.09px;letter-spacing:0.324px;transform:scaleX(1.0482);transform-origin:0 0;">59</span>
<span class="t" style="font:400 19px/1 'Liberation Sans',Arial,sans-serif;color:#0b2a63;left:58.36px;top:1127.26px;letter-spacing:0.121px;transform:scaleX(1.0282);transform-origin:0 0;">Saves</span>
<span class="t" style="font:400 19px/1 'Liberation Sans',Arial,sans-serif;color:#0b2a63;left:1192.66px;top:1127.26px;letter-spacing:-0.380px;transform:scaleX(0.8906);transform-origin:0 0;"><span class="n1">1</span>5</span>
<span class="t" style="font:400 19px/1 'Liberation Sans',Arial,sans-serif;color:#0b2a63;left:58.36px;top:1177.43px;letter-spacing:0.149px;transform:scaleX(1.0386);transform-origin:0 0;">Shares</span>
<span class="t" style="font:400 19px/1 'Liberation Sans',Arial,sans-serif;color:#0b2a63;left:1186.66px;top:1177.43px;letter-spacing:0.324px;transform:scaleX(1.0482);transform-origin:0 0;">54</span>
<span class="t" style="font:400 19px/1 'Liberation Sans',Arial,sans-serif;color:#0b2a63;left:59.16px;top:1227.60px;letter-spacing:0.177px;transform:scaleX(1.0468);transform-origin:0 0;">Other</span>
<span class="t" style="font:400 19px/1 'Liberation Sans',Arial,sans-serif;color:#0b2a63;left:1198.66px;top:1227.60px;letter-spacing:0.000px;">0</span>
<span class="t" style="font:700 19px/1 'Liberation Sans',Arial,sans-serif;color:#0b2a63;left:59.16px;top:1277.77px;letter-spacing:0.194px;transform:scaleX(1.0574);transform-origin:0 0;">Total engagement</span>
<span class="t" style="font:700 19px/1 'Liberation Sans',Arial,sans-serif;color:#0b2a63;left:1180.16px;top:1277.77px;letter-spacing:-0.380px;transform:scaleX(0.9452);transform-origin:0 0;">53<span class="n1b">1</span></span>
</section>
<aside aria-label="Total engagement summary">
<span class="t" style="font:700 19px/1 'Liberation Sans',Arial,sans-serif;color:#0b2a63;left:1692.16px;top:1070.30px;letter-spacing:0.115px;transform:scaleX(1.0363);transform-origin:0 0;">The total engagement is</span>
<span class="t" style="font:700 48.5px/1 'Liberation Sans',Arial,sans-serif;color:#0b2a63;left:1618.86px;top:1104.50px;letter-spacing:-0.970px;transform:scaleX(0.9199);transform-origin:0 0;">53<span class="n1b">1</span></span>
<span class="t" style="font:700 48.5px/1 'Liberation Sans',Arial,sans-serif;color:#0b2a63;left:1703.42px;top:1104.50px;letter-spacing:0.377px;transform:scaleX(1.0475);transform-origin:0 0;">Interactions</span>
<span class="t" style="font:400 19px/1 'Liberation Sans',Arial,sans-serif;color:#0b2a63;left:1733.91px;top:1169.50px;letter-spacing:0.240px;transform:scaleX(1.0740);transform-origin:0 0;">change of</span>
<span class="t" style="font:700 19px/1 'Liberation Sans',Arial,sans-serif;color:#2eb45f;left:1833.91px;top:1169.50px;letter-spacing:-0.380px;transform:scaleX(0.9437);transform-origin:0 0;">+<span class="n1b">1</span>9%</span>
<span class="t" style="font:400 19px/1 'Liberation Sans',Arial,sans-serif;color:#0b2a63;left:1660.91px;top:1197.00px;letter-spacing:0.418px;transform:scaleX(1.1158);transform-origin:0 0;">compared</span>
<span class="t" style="font:700 19px/1 'Liberation Sans',Arial,sans-serif;color:#0b2a63;left:1763.91px;top:1197.00px;letter-spacing:-0.045px;">Oct <span class="n1b">1</span>3 - Nov <span class="n1b">1</span>0, 2025</span>
<span class="t" style="font:400 19px/1 'Liberation Sans',Arial,sans-serif;color:#0b2a63;left:1701.41px;top:1224.50px;letter-spacing:0.381px;transform:scaleX(1.0776);transform-origin:0 0;">to</span>
<span class="t" style="font:700 19px/1 'Liberation Sans',Arial,sans-serif;color:#0b2a63;left:1724.66px;top:1224.50px;letter-spacing:-0.042px;">Sep <span class="n1b">1</span>4 - Oct <span class="n1b">1</span>2, 2025</span>
</aside>
</body></html>
